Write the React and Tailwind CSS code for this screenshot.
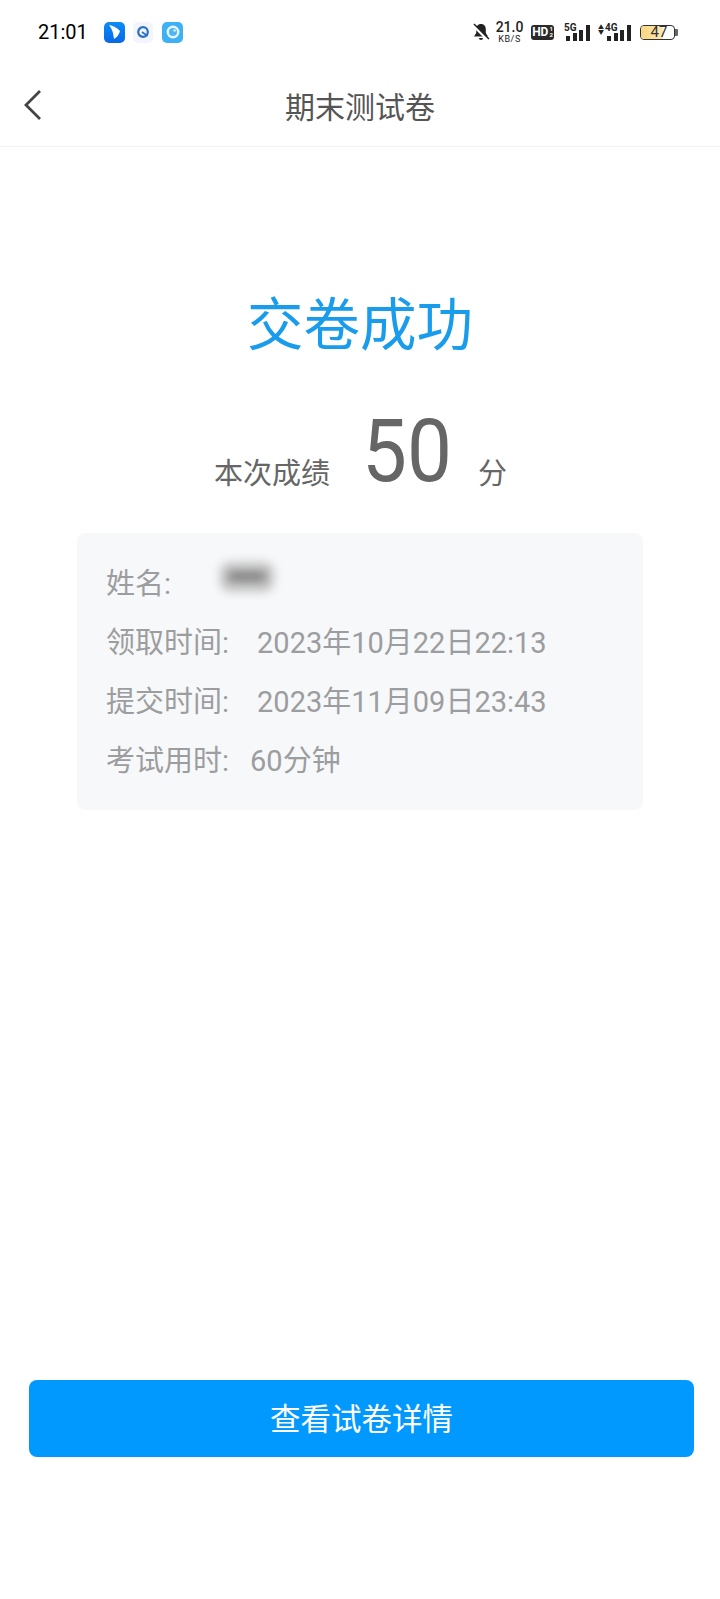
import React from "react";

const Bars = () => (
  <div className="absolute right-0 bottom-0 flex items-end gap-[2.600px]">
    <div className="w-[4px] h-[5px] bg-[#222]" />
    <div className="w-[4px] h-[8px] bg-[#222]" />
    <div className="w-[4px] h-[11px] bg-[#222]" />
    <div className="w-[4px] h-[16px] bg-[#222]" />
  </div>
);

const StatusBar = () => (
  <div className="h-[64px] flex items-center justify-between pl-[38px] pr-[42px]">
    <div className="flex items-center">
      <span className="text-[20px] text-black w-[66px]">21:01</span>
      <div className="flex items-center gap-[8px]">
        <div className="w-[21px] h-[21px] rounded-[5px] bg-gradient-to-b from-[#0e8cf5] to-[#0a68e8] flex items-center justify-center">
          <svg width="15" height="16" viewBox="0 0 15 16"><path d="M2 1c4 .5 8 2.500 11 6-1 3.500-3 6.500-6 8l-1-6C5 6 4 3.500 2 1z" fill="#fff" /></svg>
        </div>
        <div className="w-[20px] h-[21px] rounded-[5px] bg-[#f2f6fc] flex items-center justify-center">
          <svg width="14" height="14" viewBox="0 0 14 14"><circle cx="7" cy="7" r="4.800" fill="none" stroke="#2a6fc4" strokeWidth="2.200" /><path d="M6 7l5.500 4" stroke="#2a6fc4" strokeWidth="1.600" /></svg>
        </div>
        <div className="ml-[1px] w-[21px] h-[21px] rounded-[5px] bg-[#3eb0f5] flex items-center justify-center">
          <svg width="16" height="16" viewBox="0 0 16 16"><circle cx="8" cy="8" r="6.500" fill="#e6f5ff" /><circle cx="8" cy="8" r="4" fill="#4fb5f2" /><circle cx="9.600" cy="6.400" r="1.200" fill="#e6f5ff" /></svg>
        </div>
      </div>
    </div>
    <div className="flex items-center">
      <svg width="18" height="18" viewBox="0 0 18 18" fill="#222">
        <path d="M9 1C6 1 4.200 3.300 4.200 6v4L2 13.500h14L13.800 10V6C13.800 3.300 12 1 9 1z" />
        <path d="M7 15h4a2 2 0 0 1-4 0z" />
        <path d="M1.500 2.500l14 14" stroke="#fff" strokeWidth="3" />
        <path d="M2 1l15 15" stroke="#222" strokeWidth="1.500" />
      </svg>
      <div className="ml-[6px] flex flex-col items-center w-[27px] text-[#222]">
        <span className="text-[14px] leading-[10px] font-medium">21.0</span>
        <span className="text-[9px] leading-[8px] mt-[3px] tracking-[0.6px]">KB/S</span>
      </div>
      <div className="ml-[8px] w-[23px] h-[15px] bg-[#2a2a2a] rounded-[3px] flex items-center justify-center text-white text-[12px] font-bold leading-none">
        HD
        <span className="flex flex-col text-[6px] leading-[6px] ml-[1px]">
          <span>1</span>
          <span>2</span>
        </span>
      </div>
      <div className="ml-[10px] relative w-[26px] h-[17px]">
        <span className="absolute left-0 top-[-2px] text-[10px] leading-[11px] font-bold text-[#222]">5G</span>
        <Bars />
      </div>
      <div className="ml-[8px] relative w-[33px] h-[17px]">
        <span className="absolute left-0 top-[0px] text-[6px] leading-[5px] text-[#222]">▲<br />▼</span>
        <span className="absolute left-[7px] top-[-2px] text-[10px] leading-[11px] font-bold text-[#222]">4G</span>
        <Bars />
      </div>
      <div className="ml-[9px] flex items-center">
        <div className="relative w-[35px] h-[15px] rounded-[4px] border border-[#333]">
          <div className="absolute left-0 top-0 bottom-0 w-[22px] rounded-l-[3px] bg-gradient-to-r from-[#f8d77f] to-[#fbe8b5]" />
          <span className="absolute inset-0 flex items-center justify-center pl-[3px] text-[15px] leading-[13px] text-[#333]">47</span>
        </div>
        <div className="w-[3px] h-[7px] bg-[#666] rounded-r-[1px]" />
      </div>
    </div>
  </div>
);

const InfoRow = ({ label, children }) => (
  <div className="h-[59px] flex items-center text-[29px] text-[#9c9d9f]">
    <span>{label}</span>
    {children}
  </div>
);

export default function App() {
  return (
    <div className="w-[720px] h-[1599px] bg-white flex flex-col font-['Roboto','Noto_Sans_CJK_SC',sans-serif]">
      <StatusBar />

      {/* Title bar */}
      <div className="relative h-[83px] pt-[4px] flex items-center justify-center border-b border-[#f3f3f3]">
        <svg className="absolute left-[22px] top-[25px]" width="22" height="32" viewBox="0 0 22 32" fill="none">
          <path d="M18 2L4 16l14 14" stroke="#444" strokeWidth="2.800" />
        </svg>
        <span className="text-[30px] text-[#555]">期末测试卷</span>
      </div>

      <div className="flex-1 flex flex-col items-center">
        <h1 className="mt-[144px] text-[56.500px] leading-[70px] text-[#1a9cec] font-normal">交卷成功</h1>

        {/* Score */}
        <div className="mt-[46px] self-stretch pl-[214px] h-[88px] flex items-end text-[#666]">
          <span className="text-[29px] leading-[42px] w-[116px] whitespace-nowrap">本次成绩</span>
          <span className="ml-[32px] text-[80px] leading-[88px] w-[116px] scale-y-110">50</span>
          <span className="text-[29px] leading-[42px]">分</span>
        </div>

        {/* Exam info */}
        <div className="mt-[38px] w-[566px] h-[277px] rounded-[8px] bg-[#f7f8fa] px-[29px] pt-[22px]">
          <InfoRow label="姓名:">
            <div className="ml-[49px] mb-[16px] w-[54px] h-[30px] rounded-[10px] bg-[#c4c4c4] blur-[5px] flex items-center justify-center">
              <div className="w-[38px] h-[9px] rounded-full bg-[#7c7c7c]" />
            </div>
          </InfoRow>
          <InfoRow label="领取时间:">
            <span className="ml-[28px]">2023年10月22日22:13</span>
          </InfoRow>
          <InfoRow label="提交时间:">
            <span className="ml-[28px]">2023年11月09日23:43</span>
          </InfoRow>
          <InfoRow label="考试用时:">
            <span className="ml-[21px]">60分钟</span>
          </InfoRow>
        </div>

        <button className="mt-[570px] ml-[3px] w-[665px] h-[77px] pt-[3px] rounded-[8px] bg-[#0299ff] text-white text-[30.500px]">
          查看试卷详情
        </button>
      </div>
    </div>
  );
}
